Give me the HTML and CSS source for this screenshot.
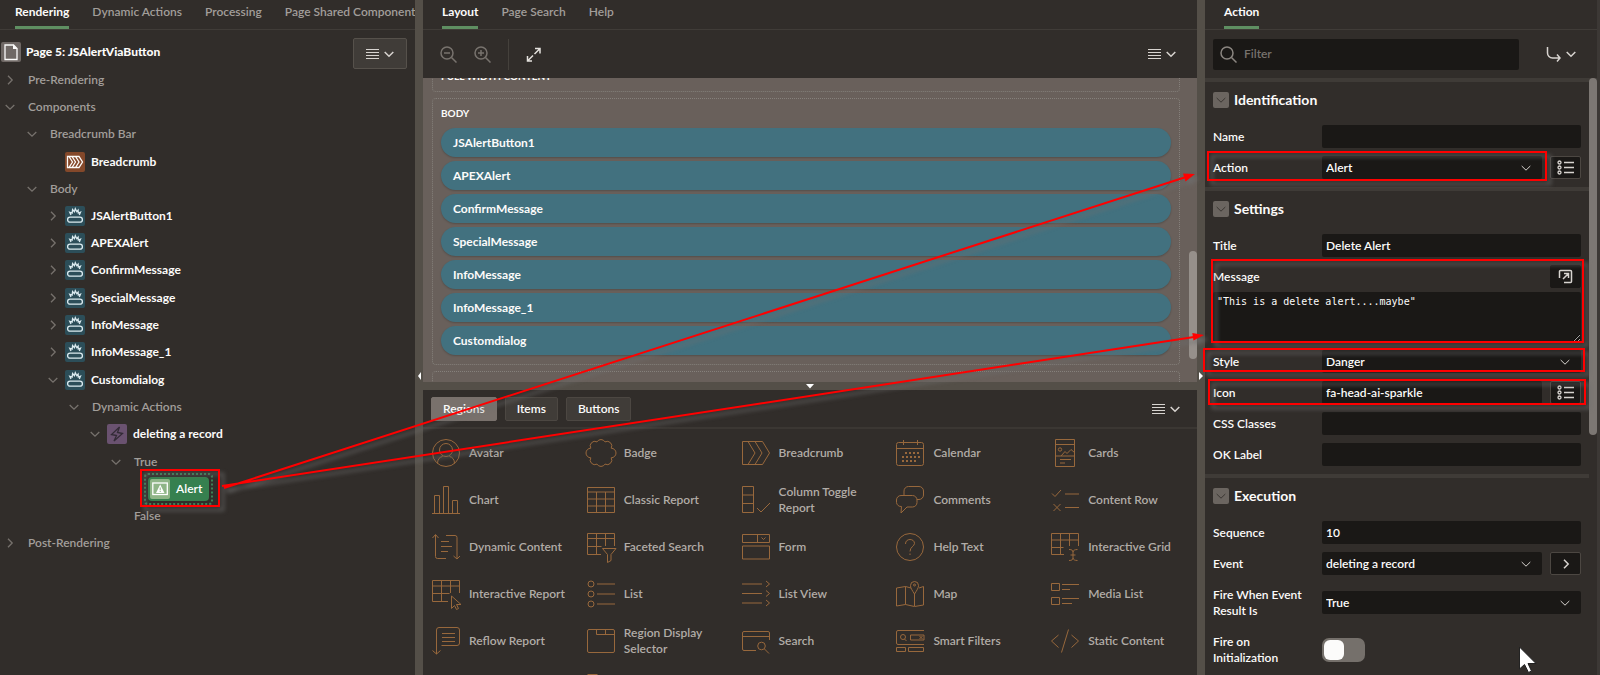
FILE: index.html
```html
<!DOCTYPE html>
<html lang="en">
<head>
<meta charset="utf-8">
<title>Page Designer</title>
<link rel="stylesheet" href="styles.css">
</head>
<body>
<svg class="symbols" aria-hidden="true">
  <symbol id="chev-down" viewBox="0 0 10 10"><path d="M0.7 3 5 7.2 9.3 3"/></symbol>
  <symbol id="chev-right" viewBox="0 0 10 10"><path d="M3 0.7 7.2 5 3 9.3"/></symbol>
  <symbol id="lines" viewBox="0 0 13 12"><path d="M0 1.5h13M0 4.5h13M0 7.5h13M0 10.5h13"/></symbol>
  <symbol id="search" viewBox="0 0 17 17"><circle cx="7" cy="7" r="6"/><path d="m11.5 11.5 5 5"/></symbol>
  <symbol id="list-pick" viewBox="0 0 17 15"><circle cx="2.5" cy="2.5" r="1.500"/><circle cx="2.5" cy="7.5" r="1.500"/><circle cx="2.5" cy="12.5" r="1.500"/><path d="M7 2.500h10M7 7.500h10M7 12.500h10"/></symbol>
  <symbol id="btn" viewBox="0 0 20 20"><rect x="2.600" y="11.200" width="14.800" height="5" rx="2.500"/><path d="M6 9 4.800 6.400l2.300.8.5-3.600 1.800 2.100L10.300 2.800l1.500 2.900 1.300-1.500.2 2.800 2.200-.8L14.300 9"/></symbol>
</svg>

<main class="designer">
  <section class="pane tree-pane">
    <nav class="tabs">
      <a class="tab active" href="#r">Rendering</a>
      <a class="tab" href="#d">Dynamic Actions</a>
      <a class="tab" href="#p">Processing</a>
      <a class="tab" href="#s">Page Shared Components</a>
    </nav>
    <header class="page-head">
      <div class="page-title">
        <span class="type-icon page"><svg viewBox="0 0 20 20"><path d="M4 3h8.500l3.500 3.500V17.500H4z"/><path class="solid" d="M12 2.500 16.500 7H12z"/></svg></span>
        <strong>Page 5: JSAlertViaButton</strong>
      </div>
      <button class="menu-btn framed" aria-label="Tree menu"><svg class="i-lines"><use href="#lines"/></svg><svg class="i-chev"><use href="#chev-down"/></svg></button>
    </header>
    <ul class="tree">
      <li><div class="node"><svg class="tog"><use href="#chev-right"/></svg><span>Pre-Rendering</span></div></li>
      <li><div class="node"><svg class="tog"><use href="#chev-down"/></svg><span>Components</span></div>
        <ul class="branch">
          <li><div class="node"><svg class="tog"><use href="#chev-down"/></svg><span>Breadcrumb Bar</span></div>
            <ul class="branch spaced">
              <li><div class="node item"><i class="tog"></i><span class="type-icon crumb"><svg viewBox="0 0 20 20"><path d="M2.500 4.500h11.500l3.500 5.500-3.500 5.500H2.500zM4 4.500 7.500 10 4 15.500M7 4.500l3.500 5.500L7 15.500M10.500 4.500 14 10l-3.500 5.500"/></svg></span><span>Breadcrumb</span></div></li>
            </ul>
          </li>
          <li><div class="node"><svg class="tog"><use href="#chev-down"/></svg><span>Body</span></div>
            <ul class="branch">
              <li><div class="node item"><svg class="tog"><use href="#chev-right"/></svg><span class="type-icon button"><svg><use href="#btn"/></svg></span><span>JSAlertButton1</span></div></li>
              <li><div class="node item"><svg class="tog"><use href="#chev-right"/></svg><span class="type-icon button"><svg><use href="#btn"/></svg></span><span>APEXAlert</span></div></li>
              <li><div class="node item"><svg class="tog"><use href="#chev-right"/></svg><span class="type-icon button"><svg><use href="#btn"/></svg></span><span>ConfirmMessage</span></div></li>
              <li class="spaced"><div class="node item"><svg class="tog"><use href="#chev-right"/></svg><span class="type-icon button"><svg><use href="#btn"/></svg></span><span>SpecialMessage</span></div></li>
              <li><div class="node item"><svg class="tog"><use href="#chev-right"/></svg><span class="type-icon button"><svg><use href="#btn"/></svg></span><span>InfoMessage</span></div></li>
              <li><div class="node item"><svg class="tog"><use href="#chev-right"/></svg><span class="type-icon button"><svg><use href="#btn"/></svg></span><span>InfoMessage_1</span></div></li>
              <li class="spaced"><div class="node item"><svg class="tog"><use href="#chev-down"/></svg><span class="type-icon button"><svg><use href="#btn"/></svg></span><span>Customdialog</span></div>
                <ul class="branch">
                  <li><div class="node"><svg class="tog"><use href="#chev-down"/></svg><span>Dynamic Actions</span></div>
                    <ul class="branch">
                      <li><div class="node item"><svg class="tog"><use href="#chev-down"/></svg><span class="type-icon bolt"><svg viewBox="0 0 20 20"><path d="M12.500 3 4.500 10.500l5 1L7 17l8.500-7.500-5-1z"/></svg></span><span>deleting a record</span></div>
                        <ul class="branch spaced">
                          <li><div class="node"><svg class="tog"><use href="#chev-down"/></svg><span>True</span></div>
                            <ul class="branch">
                              <li><div class="node"><span class="selected"><span class="picked"><span class="type-icon alert"><svg viewBox="0 0 20 20"><rect x="2.800" y="4" width="14.500" height="11.500"/><path class="solid" fill-rule="evenodd" d="M10.200 5.500 14.500 14H6zM9.700 8.500v2.800h1V8.500zM9.700 12v1h1v-1z"/></svg></span>Alert</span></span></div></li>
                            </ul>
                          </li>
                          <li><div class="node"><i class="tog"></i><span>False</span></div></li>
                        </ul>
                      </li>
                    </ul>
                  </li>
                </ul>
              </li>
            </ul>
          </li>
        </ul>
      </li>
      <li><div class="node"><svg class="tog"><use href="#chev-right"/></svg><span>Post-Rendering</span></div></li>
    </ul>
  </section>

  <div class="split vertical"><svg viewBox="0 0 8 10"><path d="M6 1v8L3 5z"/></svg></div>

  <section class="center">
    <div class="pane layout-pane">
      <nav class="tabs">
        <a class="tab active" href="#l">Layout</a>
        <a class="tab" href="#ps">Page Search</a>
        <a class="tab" href="#h">Help</a>
      </nav>
      <div class="toolbar">
        <button class="tool" aria-label="Zoom out"><svg class="i-zoom" viewBox="0 0 17 17"><circle cx="7" cy="7" r="6"/><path d="m11.500 11.500 5 5M4 7h6"/></svg></button>
        <button class="tool" aria-label="Zoom in"><svg class="i-zoom" viewBox="0 0 17 17"><circle cx="7" cy="7" r="6"/><path d="m11.500 11.500 5 5M4 7h6M7 4v6"/></svg></button>
        <span class="rule"></span>
        <button class="tool bright" aria-label="Expand"><svg class="i-expand" viewBox="0 0 15 15"><path d="M9 1.500h5v5M13.500 2 8.500 7M6 14H1.500V9M2 13.500l5-5"/></svg></button>
        <button class="menu-btn" aria-label="Layout menu"><svg class="i-lines"><use href="#lines"/></svg><svg class="i-chev"><use href="#chev-down"/></svg></button>
      </div>
      <div class="canvas">
        <div class="slots">
          <div class="slot first"><h4>Full Width Content</h4></div>
          <div class="slot body">
            <h4>Body</h4>
            <div class="pill">JSAlertButton1</div>
            <div class="pill">APEXAlert</div>
            <div class="pill">ConfirmMessage</div>
            <div class="pill">SpecialMessage</div>
            <div class="pill">InfoMessage</div>
            <div class="pill">InfoMessage_1</div>
            <div class="pill">Customdialog</div>
          </div>
          <div class="slot"></div>
        </div>
        <span class="thumb canvas-thumb"></span>
      </div>
    </div>
    <div class="split horizontal"><svg viewBox="0 0 10 8"><path d="M1 2h8L5 6.500z"/></svg></div>
    <div class="pane gallery-pane">
      <div class="gallery-bar">
        <button class="chip on">Regions</button>
        <button class="chip">Items</button>
        <button class="chip">Buttons</button>
        <button class="menu-btn" aria-label="Gallery menu"><svg class="i-lines"><use href="#lines"/></svg><svg class="i-chev"><use href="#chev-down"/></svg></button>
      </div>
      <div class="gallery">
        <div class="tile"><svg viewBox="0 0 28 28"><circle cx="14" cy="14" r="13.500"/><circle cx="14" cy="11" r="6.500"/><path d="M5.500 24.500c0-4 2-6.500 5-7M22.500 24.500c0-4-2-6.500-5-7"/></svg><span>Avatar</span></div>
        <div class="tile"><svg viewBox="0 0 28 28"><path d="M10 2.900a4.600 4.600 0 0 1 8 0 4.600 4.600 0 0 1 6.200 6.300 4.800 4.800 0 0 1 0 9.600A4.600 4.600 0 0 1 18 25.100a4.600 4.600 0 0 1-8 0 4.600 4.600 0 0 1-6.200-6.300 4.800 4.800 0 0 1 0-9.600A4.600 4.600 0 0 1 10 2.900z"/></svg><span>Badge</span></div>
        <div class="tile"><svg viewBox="0 0 28 28"><path d="M.5 2.500h20L27.500 14l-7 11.500H.5zM6 2.500 13 14 6 25.500M13 2.500 20 14l-7 11.500"/></svg><span>Breadcrumb</span></div>
        <div class="tile"><svg viewBox="0 0 28 28"><rect x=".5" y="3.500" width="27" height="23" rx="2"/><path d="M.5 9.500h27M7.500 1v5M21.500 1v5"/><path class="dots" d="M9 14h15M6 18h18M6 22h14"/></svg><span>Calendar</span></div>
        <div class="tile"><svg viewBox="0 0 28 28"><path d="M4.500.5h19v27h-19zM4.500 5.500h19M4.500 17h19M9 20.500h11M9 24h5M10 17l4-4.500 2 2 4-4 3.500 3"/><circle cx="9" cy="10.500" r="1.700"/></svg><span>Cards</span></div>

        <div class="tile"><svg viewBox="0 0 28 28"><path d="M0 27.500h28M2.500 27V9.500h5V27M11.500 27V.5h5V27M20.500 27V14.500h5V27"/></svg><span>Chart</span></div>
        <div class="tile"><svg viewBox="0 0 28 28"><path d="M.5 1.500h27v25H.5zM.5 6h27M.5 13h27M.5 20h27M9.500 6v20.500M18.500 6v20.500"/></svg><span>Classic Report</span></div>
        <div class="tile"><svg viewBox="0 0 28 28"><path d="M.5.5h11v26H.5zM.5 9h11M.5 17.500h11M15 22l4 4 9-9"/></svg><span>Column Toggle Report</span></div>
        <div class="tile"><svg viewBox="0 0 28 28"><path d="M8 9.500V5A4.500 4.500 0 0 1 12.500.5H23A4.500 4.500 0 0 1 27.500 5v4A4.500 4.500 0 0 1 23 13.500h-2M5 9.500h11.500A4.500 4.500 0 0 1 21 14v2.500a4.500 4.500 0 0 1-4.500 4.500H11l-6 6 .5-6.500A4.500 4.500 0 0 1 .5 16.500V14A4.500 4.500 0 0 1 5 9.500z"/></svg><span>Comments</span></div>
        <div class="tile"><svg viewBox="0 0 28 28"><path d="m1 7.500 3 3 6-6.500M14 8h14M2.500 18l7 7M9.500 18l-7 7M14 21.500h14"/></svg><span>Content Row</span></div>

        <div class="tile"><svg viewBox="0 0 28 28"><path d="M3.500 2v21.500a2 2 0 0 0 2 2H14M.5 5l3-3.500 3 3.500M14 2.500h9a2 2 0 0 1 2 2V26M21.500 23l3.500 3 3-3M9 8.500h8M9 13.500h11M9 18.500h7"/></svg><span>Dynamic Content</span></div>
        <div class="tile"><svg viewBox="0 0 28 28"><path d="M14 21.500H.5v-21h27V13M.5 5.500h27M.5 13.500h14M9.500.5v21M18.500.5V13M15.500 15.500h13.500l-5 6v6l-3.500 2v-8z"/></svg><span>Faceted Search</span></div>
        <div class="tile"><svg viewBox="0 0 28 28"><path d="M.5 1.500h27v8H.5zM15.500 1.500v8M19.500 4.500l2 2 2-2M.5 13h27v13H.5z"/></svg><span>Form</span></div>
        <div class="tile"><svg viewBox="0 0 28 28"><circle cx="14" cy="14" r="13.500"/><path d="M9.500 11c0-3 2-4.500 4.500-4.500s4.500 1.500 4.500 4-4.500 3.500-4.500 8M14 20.500v1.500"/></svg><span>Help Text</span></div>
        <div class="tile"><svg viewBox="0 0 28 28"><path d="M13 21.500H.5v-21h27V13M.5 7h27M.5 14.500h12M9.500.5v21M18.500.5V13M18 16.500c3 0 4 1 4 2.500v6c0 1.500-1 2.500-4 2.500M26.500 16.500c-3 0-4.500 1-4.500 2.500M26.500 27.500c-3 0-4.500-1-4.500-2.500M19.500 22h5"/></svg><span>Interactive Grid</span></div>

        <div class="tile"><svg viewBox="0 0 28 28"><path d="M16 21.500H.5v-21h27V13M.5 6h27M.5 13.500h17M9.500.5v21M18.500.5V13M19.500 16v12.500l3-3 2 4 2-1-2-4h4.500z"/></svg><span>Interactive Report</span></div>
        <div class="tile"><svg viewBox="0 0 28 28"><circle cx="4" cy="4" r="3"/><circle cx="4" cy="14" r="3"/><circle cx="4" cy="24" r="3"/><path d="M10 4h18M10 14h18M10 24h18"/></svg><span>List</span></div>
        <div class="tile"><svg viewBox="0 0 28 28"><path d="M0 4h20M0 13.500h20M0 23h20M24 1l3.500 3-3.500 3M24 10.500l3.500 3-3.500 3M24 20l3.500 3-3.500 3"/></svg><span>List View</span></div>
        <div class="tile"><svg viewBox="0 0 28 28"><path d="M15 8l-5.500-1.500L.5 8v18l9-1.500 9 2 9-1.500V6.500L23 8M9.500 6.500v18M18.500 14v12M18.500 14c-2.500-4-4-6-4-8.500a4 4 0 0 1 8 0c0 2.500-1.500 4.500-4 8.500z"/><circle cx="18.500" cy="5" r="1"/></svg><span>Map</span></div>
        <div class="tile"><svg viewBox="0 0 28 28"><path d="M.5 3.500h8v7h-8zM.5 17.500h8v7h-8zM11 4.500h17M11 9.500h8M11 18.500h17M11 23.500h10"/></svg><span>Media List</span></div>

        <div class="tile"><svg viewBox="0 0 28 28"><path d="M4.500 27V3a2.500 2.500 0 0 1 2.500-2.500h18A2.500 2.500 0 0 1 27.500 3v13a2.500 2.500 0 0 1-2.500 2.500H9.500M.5 23.500l4 3.500 4-3.500M10 6.500h13M10 10.500h13M10 14.500h13"/></svg><span>Reflow Report</span></div>
        <div class="tile"><svg viewBox="0 0 28 28"><rect x=".5" y="2.500" width="27" height="23" rx="1.500"/><path d="M9.500 2.500v5h18M18.500 2.500v5"/></svg><span>Region Display Selector</span></div>
        <div class="tile"><svg viewBox="0 0 28 28"><path d="M14 23.500H2A1.500 1.500 0 0 1 .5 22V6A1.500 1.500 0 0 1 2 4.500h24A1.500 1.500 0 0 1 27.500 6v7M.5 9.500h27M22.500 22l4.500 4.500"/><circle cx="19.500" cy="19" r="3.800"/></svg><span>Search</span></div>
        <div class="tile"><svg viewBox="0 0 28 28"><path d="M28 3.500H2A1.500 1.500 0 0 0 .5 5v11A1.500 1.500 0 0 0 2 17.500h26M14.500 8H28v5H14.500zM8.500 12l2 2M23.500 9l3 3M26.500 9l-3 3M.5 20.500h9v4h-9zM12.500 20.500h15v4h-15z"/><circle cx="7" cy="10" r="2.500"/></svg><span>Smart Filters</span></div>
        <div class="tile"><svg viewBox="0 0 28 28"><path d="M7.500 8 .5 14l7 6.500M20.500 8l7 6-7 6.500M17.500 2.500l-7 23"/></svg><span>Static Content</span></div>

        <div class="tile"></div>
        <div class="tile"><svg viewBox="0 0 28 28"><rect x="1" y=".5" width="9" height="7"/><path d="M5 7.500V24h9M14 20.500h13v7H14z"/></svg></div>
      </div>
    </div>
  </section>

  <div class="split vertical"><svg viewBox="0 0 8 10"><path d="M2 1v8l4-4z"/></svg></div>

  <section class="pane props-pane">
    <nav class="tabs"><a class="tab active" href="#a">Action</a></nav>
    <div class="toolbar filterbar">
      <label class="filter"><svg class="i-zoom"><use href="#search"/></svg><input type="search" placeholder="Filter" aria-label="Filter"></label>
      <button class="menu-btn" aria-label="Go to group"><svg class="i-goto" viewBox="0 0 15 15"><path d="M1.500 0v6a5 5 0 0 0 5 5H14M11 7.500l3 3.500-3 3.500"/></svg><svg class="i-chev"><use href="#chev-down"/></svg></button>
    </div>
    <div class="props">
      <div class="groups">
        <section class="group">
          <h3><button class="fold" aria-label="Collapse"><svg><use href="#chev-down"/></svg></button>Identification</h3>
          <div class="row"><label for="name">Name</label><input id="name" type="text"></div>
          <div class="row"><label for="action">Action</label><span class="sel"><select id="action"><option>Alert</option></select><svg><use href="#chev-down"/></svg></span><button class="side" aria-label="Pick action"><svg class="i-pick"><use href="#list-pick"/></svg></button></div>
        </section>
        <section class="group">
          <h3><button class="fold" aria-label="Collapse"><svg><use href="#chev-down"/></svg></button>Settings</h3>
          <div class="row"><label for="title">Title</label><input id="title" type="text" value="Delete Alert"></div>
          <div class="row"><label for="message">Message</label><button class="side plain" aria-label="Open editor"><svg class="i-open" viewBox="0 0 15 15"><path d="M1.500 9V2.500a1 1 0 0 1 1-1h10a1 1 0 0 1 1 1v10a1 1 0 0 1-1 1H6M5 10l5-5M6 4.500h4.500V9"/></svg></button></div>
          <textarea id="message" spellcheck="false">"This is a delete alert....maybe"</textarea>
          <div class="row"><label for="style">Style</label><span class="sel"><select id="style"><option>Danger</option></select><svg><use href="#chev-down"/></svg></span></div>
          <div class="row"><label for="icon">Icon</label><input id="icon" type="text" value="fa-head-ai-sparkle"><button class="side" aria-label="Pick icon"><svg class="i-pick"><use href="#list-pick"/></svg></button></div>
          <div class="row"><label for="css">CSS Classes</label><input id="css" type="text"></div>
          <div class="row"><label for="ok">OK Label</label><input id="ok" type="text"></div>
        </section>
        <section class="group">
          <h3><button class="fold" aria-label="Collapse"><svg><use href="#chev-down"/></svg></button>Execution</h3>
          <div class="row"><label for="seq">Sequence</label><input id="seq" type="text" value="10"></div>
          <div class="row"><label for="event">Event</label><span class="sel"><select id="event"><option>deleting a record</option></select><svg><use href="#chev-down"/></svg></span><button class="side" aria-label="Go to event"><svg class="i-chev"><use href="#chev-right"/></svg></button></div>
          <div class="row tall"><label for="fire">Fire When Event Result Is</label><span class="sel"><select id="fire"><option>True</option></select><svg><use href="#chev-down"/></svg></span></div>
          <div class="row tall"><label for="init">Fire on Initialization</label><input id="init" class="switch" type="checkbox"></div>
        </section>
      </div>
      <span class="thumb props-thumb"></span>
    </div>
  </section>

  <svg class="marks" viewBox="0 0 1600 675" aria-hidden="true">
    <g class="shaded">
      <rect x="141" y="470" width="78" height="36"/>
      <rect x="1208" y="152" width="338" height="28"/>
      <rect x="1212" y="260" width="371" height="82"/>
      <rect x="1204" y="349" width="380" height="22"/>
      <rect x="1209" y="380" width="376" height="24"/>
      <path d="M224 488 1186 177M222 486 1194 337"/>
      <path class="tip" d="m1195 174-9.500 7.500-2.500-8zM1204 335l-10.500 5.500-1.200-7.500z"/>
    </g>
    <path class="cursor" d="M1519.500 647v22l5-4.500 4 8 3-1.500-3.500-7.500h8z"/>
  </svg>
</main>
</body>
</html>
```
FILE: styles.css
```css
* { box-sizing: border-box; }

body {
  margin: 0;
  background: #312d2a;
  color: #fcfbfa;
  font: 12px/16px Lato, "Open Sans", sans-serif;
}

button, input, select { font: inherit; color: inherit; }
button { margin: 0; padding: 0; border: 0; background: none; }
h3, h4, ul { margin: 0; padding: 0; }
ul { list-style: none; }
svg { display: block; fill: none; stroke: currentColor; }
.symbols { position: absolute; width: 0; height: 0; }

.designer {
  position: relative;
  display: grid;
  grid-template-columns: 415px 8px minmax(0, 1fr) 8px 395px;
  height: 100vh;
  overflow: hidden;
}

.pane { display: flex; flex-direction: column; min-width: 0; min-height: 0; overflow: hidden; background: #312d2a; }

/* Tabs */
.tabs { display: flex; flex: none; gap: 23px; height: 30px; padding: 0 15px; border-bottom: 1px solid #403c38; overflow: hidden; }
.tab { flex: none; height: 29px; padding-top: 4px; border-bottom: 3px solid transparent; color: #a29e9a; font-weight: 600; text-decoration: none; }
.tab.active { color: #fcfbfa; border-color: #5f8f62; font-weight: 700; }
.layout-pane .tabs, .props-pane .tabs { padding: 0 19px; }

/* Splitters */
.split { display: flex; align-items: center; justify-content: center; background: #544f48; color: #fff; }
.split svg { fill: #fff; stroke: none; }
.split.vertical svg { width: 8px; height: 10px; margin-top: 40px; }
.split.horizontal { flex: none; height: 8px; }
.split.horizontal svg { width: 10px; height: 8px; }

/* Buttons with a menu */
.menu-btn { display: flex; align-items: center; justify-content: center; gap: 5px; width: 54px; height: 31px; margin-left: auto; color: #d8d4d0; }
.menu-btn.framed { border: 1px solid #56514b; border-radius: 2px; background: #403c38; }
.i-lines { width: 13px; height: 12px; }
.i-chev { width: 10px; height: 10px; stroke-width: 1.5; }
.i-zoom { width: 17px; height: 17px; stroke-width: 1.5; }
.i-expand, .i-goto, .i-open { width: 15px; height: 15px; stroke-width: 1.5; }
.i-pick { width: 17px; height: 15px; stroke-width: 1.3; }

/* Page tree */
.page-head { display: flex; align-items: flex-start; flex: none; height: 36px; margin-top: 6px; padding: 2px 8px 0 1px; }
.page-title { display: flex; align-items: center; gap: 5px; height: 28px; font-weight: 700; }
.type-icon { display: block; flex: none; width: 20px; height: 20px; border-radius: 2px; }
.type-icon svg { width: 20px; height: 20px; stroke-width: 1.3; }
.solid { fill: currentColor; stroke: none; }
.type-icon.page { background: #6f6865; }
.type-icon.crumb { background: #84482a; }
.type-icon.button { background: #2c4e59; color: #dcebf0; }
.type-icon.bolt { background: #6a5270; color: #332b36; }
.type-icon.alert { background: #8fb587; }

.tree { color: #a29e9a; font-weight: 600; padding-left: 5px; margin-top: -6px; }
.branch { padding-left: 22px; }
.branch .branch { padding-left: 21px; }
.spaced { margin-top: 1px; }
.node { display: flex; align-items: center; height: 27px; }
.node .tog { flex: none; width: 10px; height: 10px; margin-right: 13px; color: #77726d; stroke-width: 1.3; }
.node.item { gap: 6px; color: #fcfbfa; font-weight: 700; }
.node.item .tog { margin-right: 1px; }
.selected { border: 2px dotted #3c8155; border-radius: 4px; padding: 2px; margin-left: 12px; color: #fff; }
.picked { display: flex; align-items: center; gap: 6px; height: 24px; padding: 0 7px 0 2px; border-radius: 4px; background: #36804f; }

/* Layout canvas */
.center { display: flex; flex-direction: column; min-width: 0; }
.layout-pane { flex: none; }
.toolbar { display: flex; align-items: center; flex: none; height: 48px; padding: 0 8px 0 17px; }
.tool { color: #78736e; margin-right: 17px; }
.tool.bright { color: #e4e1dd; }
.rule { width: 1px; height: 31px; margin-right: 17px; background: #45413c; }
.canvas { display: flex; height: 304px; overflow: hidden; background: #69605b; }
.slots { flex: 1; display: flex; flex-direction: column; gap: 6px; padding-left: 9px; }
.slot { flex: none; min-height: 40px; padding: 6px 8px; border: 1px dotted #85807b; border-radius: 4px; }
.slot.first { height: 40px; margin-top: -26px; padding-top: 15px; }
.slot.body { display: flex; flex-direction: column; gap: 4px; padding-bottom: 9px; }
.slot h4 { font-size: 10px; line-height: 16px; text-transform: uppercase; }
.slot.body h4 { margin-bottom: 3px; }
.pill { height: 29px; padding: 0 12px; border-radius: 15px; background: #42717f; box-shadow: 0 1px 2px rgba(0, 0, 0, .2); font-weight: 700; line-height: 30px; }
.thumb { flex: none; width: 8px; border-radius: 4px; }
.canvas-thumb { height: 108px; margin: 173px 0 0 9px; background: #96908b; }

/* Component gallery */
.gallery-pane { flex: 1; }
.gallery-bar { display: flex; align-items: center; flex: none; gap: 8px; height: 39px; padding: 0 4px 0 8px; border-bottom: 2px solid #3b3733; }
.chip { height: 24px; padding: 0 11px; border: 1px solid #4c4742; border-radius: 2px; background: #403c38; font-weight: 600; }
.chip.on { background: #79716c; border-color: #79716c; }
.gallery { display: grid; grid-template-columns: repeat(5, minmax(0, 1fr)); grid-auto-rows: 47px; }
.tile { display: flex; align-items: center; gap: 9px; padding: 0 6px 0 9px; color: #b1aca7; font-weight: 600; }
.tile svg { flex: none; width: 28px; height: 28px; color: #98683c; overflow: visible; }
.dots { stroke-width: 2; stroke-dasharray: 2 2; }

/* Property editor */
.props-pane { border-right: 3px solid #3c3835; }
.filterbar { padding: 0 9px 0 8px; }
.filter { display: flex; align-items: center; gap: 7px; flex: 1; max-width: 306px; height: 31px; padding: 0 7px; border-radius: 2px; background: #1a1816; color: #8b8681; }
.filter input { flex: 1; min-width: 0; padding: 0; border: 0; outline: 0; background: none; }
.filter input::placeholder { color: #77726d; font-weight: 600; }
.props { display: flex; flex: 1; min-height: 0; border-top: 4px solid #3f3b37; }
.groups { flex: 1; min-width: 0; }
.group { padding: 0 8px 4px; border-bottom: 4px solid #3f3b37; }
.group h3 { display: flex; align-items: center; gap: 5px; height: 35px; margin-bottom: 4px; font-size: 14px; font-weight: 700; }
.fold { display: grid; place-items: center; width: 16px; height: 16px; border-radius: 2px; background: #6b6560; color: #3a3632; }
.fold svg { width: 10px; height: 10px; }
.row { display: flex; align-items: center; gap: 8px; min-height: 31px; }
.row.tall { min-height: 47px; }
.row label { flex: none; width: 101px; font-weight: 600; }
.row input[type="text"], .sel { flex: 1; min-width: 0; height: 23px; border: 0; border-radius: 2px; background: #1a1816; font-weight: 600; }
.row input[type="text"] { padding: 0 4px; }
.sel { position: relative; display: flex; align-items: center; }
.sel select { width: 100%; height: 23px; padding: 0 24px 0 4px; border: 0; background: none; appearance: none; }
.sel svg { position: absolute; right: 11px; width: 10px; height: 10px; pointer-events: none; color: #d8d4d0; }
.side { display: grid; place-items: center; flex: none; width: 31px; height: 23px; border: 1px solid #4c4742; border-radius: 2px; background: #1a1816; color: #d8d4d0; }
.side.plain { margin-left: auto; border-color: #1a1816; }
textarea { display: block; width: 100%; height: 50px; margin: 0 0 4px; padding: 3px 4px; border: 0; border-radius: 2px; background: #1a1816; color: #fcfbfa; font: 10px/14px "DejaVu Sans Mono", monospace; }
.switch { appearance: none; width: 43px; height: 24px; margin: 0; padding: 2px; border-radius: 7px; background: #75706b; }
.switch::before { content: ""; display: block; width: 20px; height: 20px; border-radius: 6px; background: #fcfbfa; }
.props-thumb { height: 357px; margin-top: -4px; background: #7c7773; }

/* Annotations laid over the designer */
.marks { position: absolute; top: 0; left: 0; width: 1600px; height: 675px; pointer-events: none; }
.shaded { stroke: #f00; stroke-width: 2; filter: drop-shadow(4px 4px 2px rgba(110, 110, 110, .8)); }
.tip { fill: #f00; stroke: none; }
.cursor { fill: #fff; stroke: #222; }
```
